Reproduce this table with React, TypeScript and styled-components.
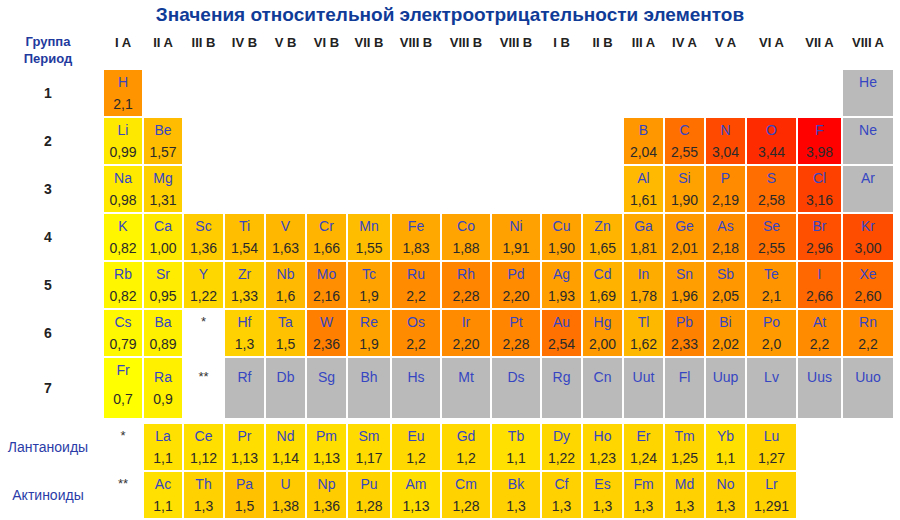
import styled, { createGlobalStyle } from 'styled-components'

const GlobalStyle = createGlobalStyle`
  body {
    margin: 0;
    background: #fff;
    font-family: "Liberation Sans", Arial, sans-serif;
  }
`

const COLS = '102px 38px 38px 39px 39px 39px 39px 42px 48px 48px 48px 39px 39px 39px 39px 39px 49px 43px 50px'

const GROUPS = [
  'I A', 'II A', 'III B', 'IV B', 'V B', 'VI B', 'VII B', 'VIII B', 'VIII B',
  'VIII B', 'I B', 'II B', 'III A', 'IV A', 'V A', 'VI A', 'VII A', 'VIII A',
]

// symbol:value, "-" = empty cell, "#" prefix = grey (no data), "*" = marker
type Item = string
const blanks = (n: number): Item[] => Array(n).fill('-')

const PERIODS: { label: string; tall?: boolean; items: Item[] }[] = [
  { label: '1', items: ['H:2,1', ...blanks(16), '#He'] },
  { label: '2', items: ['Li:0,99', 'Be:1,57', ...blanks(10), 'B:2,04', 'C:2,55', 'N:3,04', 'O:3,44', 'F:3,98', '#Ne'] },
  { label: '3', items: ['Na:0,98', 'Mg:1,31', ...blanks(10), 'Al:1,61', 'Si:1,90', 'P:2,19', 'S:2,58', 'Cl:3,16', '#Ar'] },
  {
    label: '4',
    items: ['K:0,82', 'Ca:1,00', 'Sc:1,36', 'Ti:1,54', 'V:1,63', 'Cr:1,66', 'Mn:1,55', 'Fe:1,83', 'Co:1,88',
      'Ni:1,91', 'Cu:1,90', 'Zn:1,65', 'Ga:1,81', 'Ge:2,01', 'As:2,18', 'Se:2,55', 'Br:2,96', 'Kr:3,00'],
  },
  {
    label: '5',
    items: ['Rb:0,82', 'Sr:0,95', 'Y:1,22', 'Zr:1,33', 'Nb:1,6', 'Mo:2,16', 'Tc:1,9', 'Ru:2,2', 'Rh:2,28',
      'Pd:2,20', 'Ag:1,93', 'Cd:1,69', 'In:1,78', 'Sn:1,96', 'Sb:2,05', 'Te:2,1', 'I:2,66', 'Xe:2,60'],
  },
  {
    label: '6',
    items: ['Cs:0,79', 'Ba:0,89', '*', 'Hf:1,3', 'Ta:1,5', 'W:2,36', 'Re:1,9', 'Os:2,2', 'Ir:2,20',
      'Pt:2,28', 'Au:2,54', 'Hg:2,00', 'Tl:1,62', 'Pb:2,33', 'Bi:2,02', 'Po:2,0', 'At:2,2', 'Rn:2,2'],
  },
  {
    label: '7',
    tall: true,
    items: ['Fr:0,7', 'Ra:0,9', '**', '#Rf', '#Db', '#Sg', '#Bh', '#Hs', '#Mt', '#Ds', '#Rg', '#Cn',
      '#Uut', '#Fl', '#Uup', '#Lv', '#Uus', '#Uuo'],
  },
]

const SERIES: { label: string; items: Item[] }[] = [
  {
    label: 'Лантаноиды',
    items: ['*', 'La:1,1', 'Ce:1,12', 'Pr:1,13', 'Nd:1,14', 'Pm:1,13', 'Sm:1,17', 'Eu:1,2', 'Gd:1,2',
      'Tb:1,1', 'Dy:1,22', 'Ho:1,23', 'Er:1,24', 'Tm:1,25', 'Yb:1,1', 'Lu:1,27', '-', '-'],
  },
  {
    label: 'Актиноиды',
    items: ['**', 'Ac:1,1', 'Th:1,3', 'Pa:1,5', 'U:1,38', 'Np:1,36', 'Pu:1,28', 'Am:1,13', 'Cm:1,28',
      'Bk:1,3', 'Cf:1,3', 'Es:1,3', 'Fm:1,3', 'Md:1,3', 'No:1,3', 'Lr:1,291', '-', '-'],
  },
]

// yellow (0.7) -> red (4.0)
function tint(value: string) {
  const v = parseFloat(value.replace(',', '.'))
  const hue = Math.max(0, Math.min(60, (60 * (4.0 - v)) / 3.3))
  return `hsl(${hue.toFixed(1)}, 100%, 50%)`
}

const Page = styled.div`
  width: 900px;
  height: 520px;
  overflow: hidden;
`

const Title = styled.h1`
  margin: 0;
  height: 30px;
  line-height: 30px;
  font-size: 19px;
  font-weight: bold;
  color: #103c98;
  text-align: center;
`

const Table = styled.div`
  display: flex;
  flex-direction: column;
  gap: 2px;
`

const Row = styled.div<{ $height: number; $offset?: number }>`
  display: grid;
  grid-template-columns: ${COLS};
  column-gap: 2px;
  height: ${(p) => p.$height}px;
  margin-top: ${(p) => p.$offset ?? 0}px;
`

const RowLabel = styled.div<{ $bold?: boolean }>`
  display: flex;
  align-items: center;
  justify-content: center;
  padding-right: 6px;
  font-size: ${(p) => (p.$bold ? 14 : 14)}px;
  font-weight: ${(p) => (p.$bold ? 'bold' : 'normal')};
  color: ${(p) => (p.$bold ? '#222' : '#2b3ca8')};
`

const HeadLabel = styled.div`
  padding: 3px 6px 0 0;
  line-height: 17px;
  font-size: 13px;
  font-weight: bold;
  color: #1f3a9e;
  text-align: center;
`

const GroupLabel = styled.div`
  padding-top: 4px;
  line-height: 17px;
  font-size: 13px;
  font-weight: bold;
  color: #222;
  text-align: center;
  white-space: nowrap;
`

const Cell = styled.div<{ $bg?: string; $spread?: boolean }>`
  display: flex;
  flex-direction: column;
  justify-content: ${(p) => (p.$spread ? 'space-between' : 'center')};
  padding: ${(p) => (p.$spread ? '1px 0 8px' : '0')};
  background: ${(p) => p.$bg ?? 'transparent'};
  text-align: center;
  font-size: 14px;
  line-height: 22px;
`

const Symbol = styled.span`
  color: #3646c2;
`

const Value = styled.span`
  color: #2a2a2a;
`

const Marker = styled.span`
  color: #333;
  font-size: 13px;
`

function ElementCell({ item, spread }: { item: Item; spread?: boolean }) {
  if (item === '-') return <Cell />
  if (item.startsWith('*')) {
    return (
      <Cell>
        <Marker>{item}</Marker>
        <Value>&nbsp;</Value>
      </Cell>
    )
  }
  if (item.startsWith('#')) {
    return (
      <Cell $bg="#bababa">
        <Symbol>{item.slice(1)}</Symbol>
        <Value>&nbsp;</Value>
      </Cell>
    )
  }
  const [sym, val] = item.split(':')
  return (
    <Cell $bg={tint(val)} $spread={spread}>
      <Symbol>{sym}</Symbol>
      <Value>{val}</Value>
    </Cell>
  )
}

export default function App() {
  return (
    <Page>
      <GlobalStyle />
      <Title>Значения относительной электроотрицательности элементов</Title>
      <Table>
        <Row $height={38}>
          <HeadLabel>
            Группа
            <br />
            Период
          </HeadLabel>
          {GROUPS.map((g, i) => (
            <GroupLabel key={i}>{g}</GroupLabel>
          ))}
        </Row>
        {PERIODS.map((p) => (
          <Row key={p.label} $height={p.tall ? 60 : 46}>
            <RowLabel $bold>{p.label}</RowLabel>
            {p.items.map((it, i) => (
              <ElementCell key={i} item={it} spread={it === 'Fr:0,7'} />
            ))}
          </Row>
        ))}
        {SERIES.map((s, n) => (
          <Row key={s.label} $height={46} $offset={n === 0 ? 4 : 0}>
            <RowLabel>{s.label}</RowLabel>
            {s.items.map((it, i) => (
              <ElementCell key={i} item={it} />
            ))}
          </Row>
        ))}
      </Table>
    </Page>
  )
}
